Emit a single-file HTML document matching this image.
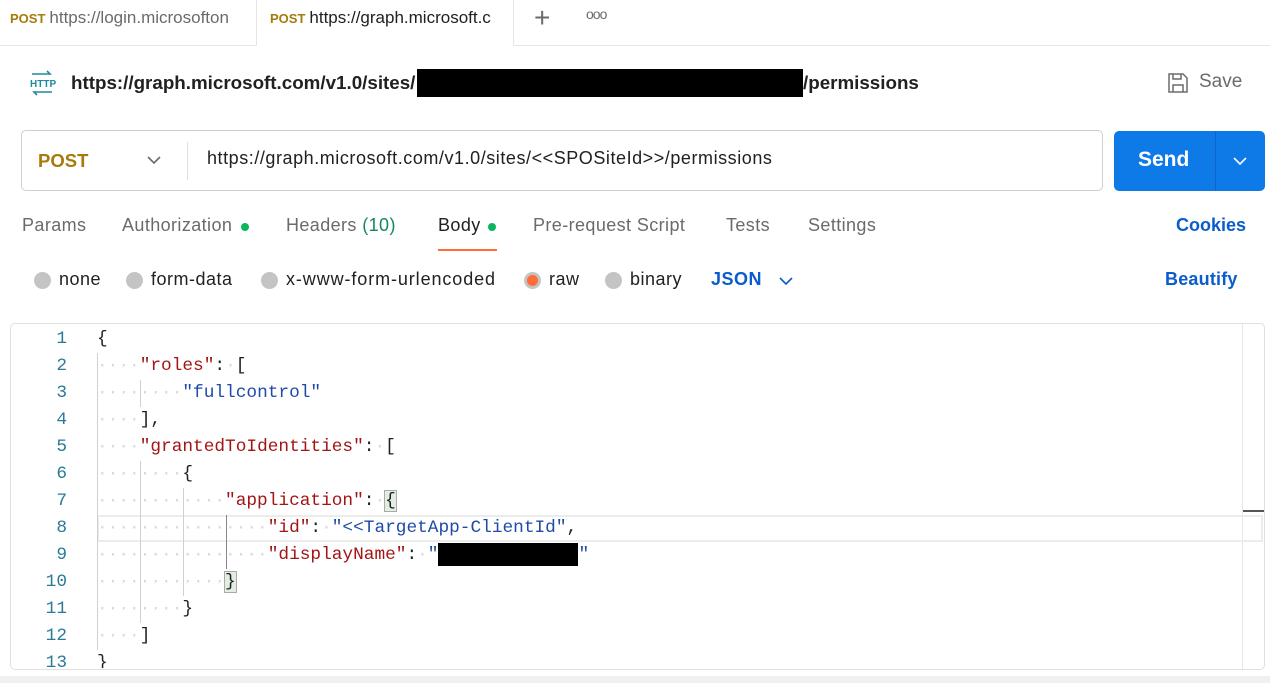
<!DOCTYPE html>
<html><head><meta charset="utf-8"><style>
*{box-sizing:border-box;margin:0;padding:0}
body{width:1270px;height:683px;overflow:hidden;background:#fff;font-family:"Liberation Sans",sans-serif;position:relative;color:#212121}
.a{position:absolute;white-space:nowrap}
.tab{position:absolute;top:0;height:46px;font-size:17px;line-height:36px;color:#6b6b6b}
.m{color:#a8790b;font-size:13px;font-weight:bold;margin-right:4px}
.nav{font-size:18px;letter-spacing:0.4px;color:#6b6b6b;top:215px}
.radio{position:absolute;top:272px;width:17px;height:17px;border-radius:50%;background:#c4c4c4}
.rl{font-size:18px;letter-spacing:0.5px;color:#212121;top:269px}
.code{font-family:"Liberation Mono",monospace;font-size:17.8px;line-height:27px;height:27px}
.ln{position:absolute;left:20px;width:47px;text-align:right;font-family:"Liberation Mono",monospace;font-size:17.8px;line-height:27px;color:#2a7a9a}
.d{color:#dadada}
.k{color:#a31515}
.s{color:#1f4aa8}
.g{position:absolute;width:1px;background:#d0d0d0}
</style></head><body>
<div class="a" style="left:0;top:45px;width:1270px;height:1px;background:#e6e6e6"></div>
<div class="tab" style="left:0;width:240px;padding-left:10px;overflow:hidden"><span class="m">POST</span>https://login.microsofton</div>
<div class="tab" style="left:256px;width:258px;padding-left:13px;background:#fff;border-left:1px solid #e6e6e6;border-right:1px solid #e6e6e6;height:46px;z-index:2;overflow:hidden;color:#212121"><span class="m">POST</span>https://graph.microsoft.c</div>
<div class="a" style="left:534px;top:2px;font-size:28px;color:#6b6b6b;font-weight:300">+</div>
<div class="a" style="left:586px;top:6px;font-size:14px;color:#6b6b6b;letter-spacing:-1px">ooo</div>

<svg class="a" style="left:28px;top:70px" width="28" height="26" viewBox="0 0 28 26"><path d="M4 4h18l-3-3M24 22H6l3 3" stroke="#1f8a9a" stroke-width="1.6" fill="none"/><text x="2" y="17" font-size="10" fill="#1f8a9a" font-family="Liberation Sans" font-weight="bold">HTTP</text></svg>
<div class="a" style="left:71px;top:72px;font-size:18.8px;font-weight:bold">https://graph.microsoft.com/v1.0/sites/</div>
<div class="a" style="left:417px;top:69px;width:386px;height:28px;background:#000"></div>
<div class="a" style="left:803px;top:72px;font-size:18.8px;font-weight:bold">/permissions</div>
<svg class="a" style="left:1167px;top:72px" width="22" height="22" viewBox="0 0 22 22"><path d="M2 2h14l4 4v14H2z M6 2v5h8V2 M6 20v-7h10v7" stroke="#6b6b6b" stroke-width="1.5" fill="none"/></svg>
<div class="a" style="left:1199px;top:71px;font-size:19px;color:#6b6b6b">Save</div>

<div class="a" style="left:21px;top:130px;width:1082px;height:61px;border:1px solid #cfcfcf;border-radius:5px"></div>
<div class="a" style="left:38px;top:150px;font-size:18.5px;color:#a8790b;font-weight:bold">POST</div>
<svg class="a" style="left:147px;top:155px" width="14" height="10"><path d="M1 2l6 6 6-6" stroke="#6b6b6b" stroke-width="1.6" fill="none"/></svg>
<div class="a" style="left:187px;top:142px;width:1px;height:38px;background:#e0e0e0"></div>
<div class="a" style="left:207px;top:148px;font-size:18px;letter-spacing:0.55px">https://graph.microsoft.com/v1.0/sites/&lt;&lt;SPOSiteId&gt;&gt;/permissions</div>
<div class="a" style="left:1114px;top:131px;width:151px;height:60px;background:#0d7ae8;border-radius:5px"></div>
<div class="a" style="left:1215px;top:131px;width:1px;height:60px;background:#0a66c8"></div>
<div class="a" style="left:1138px;top:148px;font-size:21px;font-weight:bold;color:#fff">Send</div>
<svg class="a" style="left:1233px;top:156px" width="14" height="10"><path d="M1 2l6 6 6-6" stroke="#fff" stroke-width="1.6" fill="none"/></svg>

<div class="a nav" style="left:22px">Params</div>
<div class="a nav" style="left:122px">Authorization</div>
<div class="a" style="left:241px;top:223px;width:8px;height:8px;border-radius:50%;background:#0bb55d"></div>
<div class="a nav" style="left:286px">Headers <span style="color:#118a5a">(10)</span></div>
<div class="a nav" style="left:438px;color:#212121">Body</div>
<div class="a" style="left:488px;top:223px;width:8px;height:8px;border-radius:50%;background:#0bb55d"></div>
<div class="a" style="left:438px;top:249px;width:59px;height:2px;background:#ff6c37"></div>
<div class="a nav" style="left:533px">Pre-request Script</div>
<div class="a nav" style="left:726px">Tests</div>
<div class="a nav" style="left:808px">Settings</div>
<div class="a nav" style="left:1176px;color:#0b5ccc;font-weight:bold;letter-spacing:0">Cookies</div>

<div class="radio" style="left:34px"></div><div class="a rl" style="left:59px">none</div>
<div class="radio" style="left:126px"></div><div class="a rl" style="left:151px">form-data</div>
<div class="radio" style="left:261px"></div><div class="a rl" style="left:286px;letter-spacing:0.9px">x-www-form-urlencoded</div>
<div class="radio" style="left:524px;background:#ff6c37;border:3px solid #c4c4c4"></div><div class="a rl" style="left:549px">raw</div>
<div class="radio" style="left:605px"></div><div class="a rl" style="left:630px">binary</div>
<div class="a rl" style="left:711px;color:#0b5ccc;font-weight:bold">JSON</div>
<svg class="a" style="left:779px;top:276px" width="14" height="10"><path d="M1 2l6 6 6-6" stroke="#0b5ccc" stroke-width="1.6" fill="none"/></svg>
<div class="a rl" style="left:1165px;color:#0b5ccc;font-weight:bold;letter-spacing:0.2px">Beautify</div>

<div class="a" style="left:10px;top:323px;width:1255px;height:347px;border:1px solid #e0e0e0;border-radius:5px;overflow:hidden">
<div class="a" style="left:1231px;top:0;width:1px;height:347px;background:#e6e6e6"></div>
<div class="a" style="left:1232px;top:186px;width:22px;height:2px;background:#555"></div>
<div class="a" style="left:86px;top:191px;width:1166px;height:27px;border:2px solid #ececec"></div>
</div>
<div class="a" style="left:0;top:676px;width:1270px;height:7px;background:#f0f0f0"></div>

<div class="g" style="left:97px;top:353px;height:297px"></div>
<div class="g" style="left:140px;top:380px;height:27px"></div>
<div class="g" style="left:140px;top:461px;height:162px"></div>
<div class="g" style="left:183px;top:488px;height:108px"></div>
<div class="g" style="left:226px;top:515px;height:54px;background:#888"></div>

<div class="ln" style="top:326px">1</div>
<div class="ln" style="top:353px">2</div>
<div class="ln" style="top:380px">3</div>
<div class="ln" style="top:407px">4</div>
<div class="ln" style="top:434px">5</div>
<div class="ln" style="top:461px">6</div>
<div class="ln" style="top:488px">7</div>
<div class="ln" style="top:515px">8</div>
<div class="ln" style="top:542px">9</div>
<div class="ln" style="top:569px">10</div>
<div class="ln" style="top:596px">11</div>
<div class="ln" style="top:623px">12</div>
<div class="ln" style="top:650px">13</div>

<div class="a code" style="left:97px;top:326px">{</div>
<div class="a code" style="left:97px;top:353px"><span class="d">····</span><span class="k">"roles"</span>:<span class="d">·</span>[</div>
<div class="a code" style="left:97px;top:380px"><span class="d">········</span><span class="s">"fullcontrol"</span></div>
<div class="a code" style="left:97px;top:407px"><span class="d">····</span>],</div>
<div class="a code" style="left:97px;top:434px"><span class="d">····</span><span class="k">"grantedToIdentities"</span>:<span class="d">·</span>[</div>
<div class="a code" style="left:97px;top:461px"><span class="d">········</span>{</div>
<div class="a code" style="left:97px;top:488px"><span class="d">············</span><span class="k">"application"</span>:<span class="d">·</span><span style="background:#e4ede4;outline:1px solid #aaa">{</span></div>
<div class="a code" style="left:97px;top:515px"><span class="d">················</span><span class="k">"id"</span>:<span class="d">·</span><span class="s">"&lt;&lt;TargetApp-ClientId"</span>,</div>
<div class="a code" style="left:97px;top:542px"><span class="d">················</span><span class="k">"displayName"</span>:<span class="d">·</span><span class="s">"</span><span style="display:inline-block;width:140px;height:23px;background:#000;vertical-align:middle"></span><span class="s">"</span></div>
<div class="a code" style="left:97px;top:569px"><span class="d">············</span><span style="background:#e4ede4;outline:1px solid #aaa">}</span></div>
<div class="a code" style="left:97px;top:596px"><span class="d">········</span>}</div>
<div class="a code" style="left:97px;top:623px"><span class="d">····</span>]</div>
<div class="a code" style="left:97px;top:650px;height:18px;overflow:hidden">}</div>
</body></html>
